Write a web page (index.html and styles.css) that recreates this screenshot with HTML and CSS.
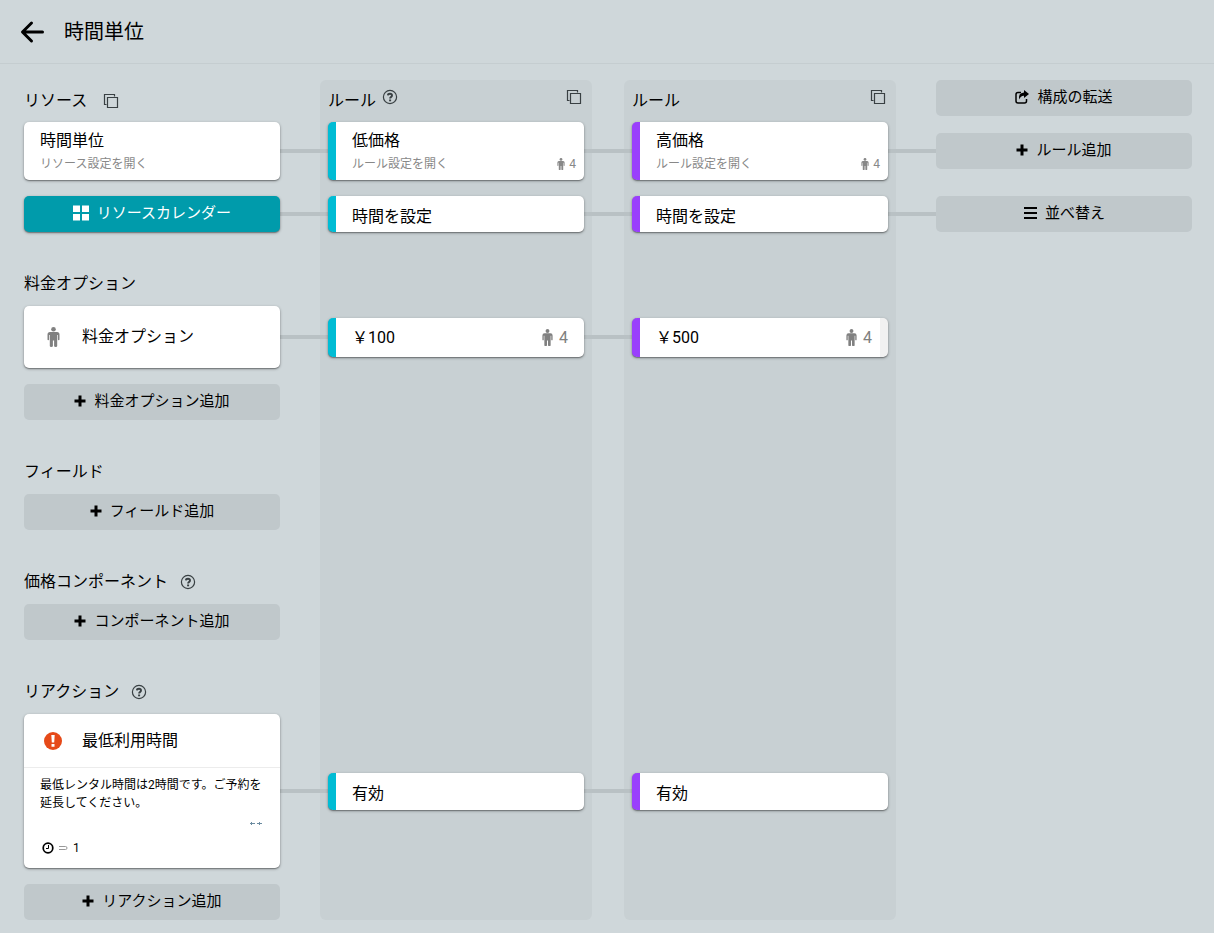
FILE: index.html
```html
<!DOCTYPE html>
<html lang="ja">
<head>
<meta charset="utf-8">
<meta name="viewport" content="width=device-width, initial-scale=1">
<title>時間単位</title>
<link rel="stylesheet" href="styles.css">
</head>
<body>
<svg class="sprite" aria-hidden="true">
  <symbol id="copy" viewBox="0 0 16 16"><path d="M3.500 11.500H1.500V1.500H11.500V3.500M4.500 4.500H14.500V14.500H4.500Z" fill="none" stroke="currentColor" stroke-width="1.200"/></symbol>
  <symbol id="help" viewBox="0 0 16 16"><circle cx="8" cy="8" r="6.600" fill="none" stroke="currentColor" stroke-width="1.200"/><path d="M5.900 6.300C6.100 4.200 10 4.200 10 6.400C10 7.900 8.100 7.900 8.100 9.400" fill="none" stroke="currentColor" stroke-width="1.900"/><path d="M7.100 10.500h2v1.800h-2z" fill="currentColor"/></symbol>
  <symbol id="plus" viewBox="0 0 12 12"><path d="M4.500 0.500h3v4h4v3h-4v4h-3v-4h-4v-3h4z" fill="currentColor"/></symbol>
  <symbol id="person" viewBox="0 0 12 20"><circle cx="6" cy="2.300" r="2.300" fill="currentColor"/><path d="M2.500 5H9.500Q12 5 12 7.500V12.500Q12 13.300 11.200 13.300Q10.400 13.300 10.400 12.500V8H9.700V19Q9.700 20 8.300 20Q6.600 20 6.600 19V13.500H5.400V19Q5.400 20 3.700 20Q2.300 20 2.300 19V8H1.600V12.500Q1.600 13.300 0.800 13.300Q0 13.300 0 12.500V7.500Q0 5 2.500 5Z" fill="currentColor"/></symbol>
</svg>
<header class="topbar">
  <button class="icon-button" type="button" aria-label="戻る"><svg class="back" viewBox="0 0 24 24" aria-hidden="true"><path d="M11.500 3L2.500 12L11.500 21M3 12H22.500" fill="none" stroke="currentColor" stroke-width="3" stroke-linecap="round" stroke-linejoin="round"/></svg></button>
  <h1 class="title">時間単位</h1>
</header>
<main class="board">
  <div class="panel panel-low"></div>
  <div class="panel panel-high"></div>
  <div class="line line-rule"></div>
  <div class="line line-time"></div>
  <div class="line line-price"></div>
  <div class="line line-reaction"></div>

  <div class="col-1 row-1 head"><h2 class="label">リソース</h2><button class="icon-button spaced" type="button" aria-label="リソースをコピー"><svg class="small-icon"><use href="#copy"/></svg></button></div>
  <div class="col-2 row-1 head"><h2 class="label">ルール</h2><button class="icon-button raised" type="button" aria-label="ヘルプ"><svg class="small-icon"><use href="#help"/></svg></button><button class="icon-button raised push" type="button" aria-label="ルールをコピー"><svg class="small-icon"><use href="#copy"/></svg></button></div>
  <div class="col-3 row-1 head"><h2 class="label">ルール</h2><button class="icon-button raised push" type="button" aria-label="ルールをコピー"><svg class="small-icon"><use href="#copy"/></svg></button></div>
  <button class="col-4 row-1 action" type="button"><svg class="action-icon" viewBox="0 0 14 14" aria-hidden="true"><path d="M6 2.500H3Q1 2.500 1 4.500V11Q1 13 3 13H9.500Q11.500 13 11.500 11V9" fill="none" stroke="currentColor" stroke-width="1.500"/><path d="M9 0L14 4L9 8V5.800Q5.500 5.600 4.500 9.500Q2.500 3 9 2.400Z" fill="currentColor"/></svg>構成の転送</button>

  <a class="col-1 row-2 card summary" href="#resource"><span class="name">時間単位</span><span class="hint">リソース設定を開く</span></a>
  <a class="col-2 row-2 card summary low" href="#low"><span class="name">低価格</span><span class="hint">ルール設定を開く<span class="count"><svg class="person-small"><use href="#person"/></svg>4</span></span></a>
  <a class="col-3 row-2 card summary high" href="#high"><span class="name">高価格</span><span class="hint">ルール設定を開く<span class="count"><svg class="person-small"><use href="#person"/></svg>4</span></span></a>
  <button class="col-4 row-2 action" type="button"><svg class="plus"><use href="#plus"/></svg>ルール追加</button>

  <button class="col-1 row-3 action primary" type="button"><svg class="grid-icon" viewBox="0 0 16 16" aria-hidden="true"><path d="M0 0.500H7V7H0ZM9 0.500H16V7H9ZM0 9H7V15.500H0ZM9 9H16V15.500H9Z" fill="currentColor"/></svg>リソースカレンダー</button>
  <a class="col-2 row-3 card cell low" href="#low-time">時間を設定</a>
  <a class="col-3 row-3 card cell high" href="#high-time">時間を設定</a>
  <button class="col-4 row-3 action" type="button"><svg class="action-icon" viewBox="0 0 14 14" aria-hidden="true"><path d="M1 2H14M1 7H14M1 12H14" fill="none" stroke="currentColor" stroke-width="2"/></svg>並べ替え</button>

  <div class="col-1 row-4 section"><h2 class="label">料金オプション</h2></div>
  <a class="col-1 row-5 card option" href="#option"><svg class="person-large"><use href="#person"/></svg>料金オプション</a>
  <a class="col-2 row-5 card price low" href="#low-price">￥100<span class="price-count"><svg class="person"><use href="#person"/></svg>4</span></a>
  <a class="col-3 row-5 card price high handled" href="#high-price">￥500<span class="price-count"><svg class="person"><use href="#person"/></svg>4</span></a>
  <button class="col-1 row-6 action below" type="button"><svg class="plus"><use href="#plus"/></svg>料金オプション追加</button>

  <div class="col-1 row-7 section"><h2 class="label">フィールド</h2></div>
  <button class="col-1 row-8 action" type="button"><svg class="plus"><use href="#plus"/></svg>フィールド追加</button>

  <div class="col-1 row-9 section"><h2 class="label">価格コンポーネント</h2><button class="icon-button" type="button" aria-label="ヘルプ"><svg class="small-icon"><use href="#help"/></svg></button></div>
  <button class="col-1 row-10 action" type="button"><svg class="plus"><use href="#plus"/></svg>コンポーネント追加</button>

  <div class="col-1 row-11 section"><h2 class="label">リアクション</h2><button class="icon-button" type="button" aria-label="ヘルプ"><svg class="small-icon"><use href="#help"/></svg></button></div>
  <article class="col-1 row-12 card reaction">
    <h3 class="reaction-title"><svg class="alert" viewBox="0 0 18 18" aria-hidden="true"><circle cx="9" cy="9" r="9" fill="#e64a19"/><path d="M7.300 3H10.700L10.200 10.500H7.800ZM7.500 12H10.500V14.800H7.500Z" fill="#fff"/></svg>最低利用時間</h3>
    <div class="reaction-body">
      <p class="message">最低レンタル時間は2時間です。ご予約を延長してください。</p>
      <svg class="arrows" viewBox="0 0 12 6" aria-hidden="true"><path d="M0 2.500H5M1.500 1V4M7 2.500H12M9.500 1V4" fill="none" stroke="#6b8ba0"/></svg>
      <p class="condition"><svg class="clock" viewBox="0 0 12 12" aria-hidden="true"><circle cx="6" cy="6" r="4.800" fill="none" stroke="currentColor" stroke-width="1.700"/><path d="M6.500 3V6.500H4" fill="none" stroke="currentColor"/></svg><svg class="implies" viewBox="0 0 9 6" aria-hidden="true"><path d="M0 1.500H6.500Q8 1.500 8 3Q8 4.500 6.500 4.500H0" fill="none" stroke="#999"/></svg>1</p>
    </div>
  </article>
  <a class="col-2 row-12 card cell low" href="#low-reaction">有効</a>
  <a class="col-3 row-12 card cell high" href="#high-reaction">有効</a>
  <button class="col-1 row-13 action below" type="button"><svg class="plus"><use href="#plus"/></svg>リアクション追加</button>
</main>
</body>
</html>
```
FILE: styles.css
```css
* { box-sizing: border-box; }
body {
  margin: 0;
  background: #cfd7da;
  color: #000;
  font: 16px/24px Roboto, "Noto Sans CJK JP", sans-serif;
}
h1, h2, h3, p { margin: 0; font-weight: 400; }
svg { flex: none; }
.sprite { display: none; }
.topbar {
  display: flex;
  align-items: center;
  gap: 20px;
  height: 64px;
  padding: 0 20px;
  border-bottom: 1px solid #c5cdd0;
}
.title { font-size: 20px; line-height: 28px; }
.back { width: 24px; height: 24px; display: block; }
.icon-button {
  display: flex;
  padding: 0;
  border: 0;
  background: none;
  color: #000;
  cursor: pointer;
}
.board {
  display: grid;
  grid-template-columns: repeat(4, minmax(0, 256px));
  column-gap: 48px;
  padding: 16px 22px 13px 24px;
}
.col-1 { grid-column: 1; }
.col-2 { grid-column: 2; }
.col-3 { grid-column: 3; }
.col-4 { grid-column: 4; }
.row-1 { grid-row: 1; }
.row-2 { grid-row: 2; }
.row-3 { grid-row: 3; }
.row-4 { grid-row: 4; }
.row-5 { grid-row: 5; }
.row-6 { grid-row: 6; }
.row-7 { grid-row: 7; }
.row-8 { grid-row: 8; }
.row-9 { grid-row: 9; }
.row-10 { grid-row: 10; }
.row-11 { grid-row: 11; }
.row-12 { grid-row: 12; }
.row-13 { grid-row: 13; }
.panel {
  grid-row: 1 / 14;
  margin: 0 -8px;
  border-radius: 6px;
  background: #c8d0d3;
}
.panel-low { grid-column: 2; }
.panel-high { grid-column: 3; }
.line {
  grid-column: 1 / 5;
  align-self: center;
  height: 4px;
  background: #b9c1c4;
}
.line-rule { grid-row: 2; }
.line-time { grid-row: 3; margin-top: 16px; }
.line-price { grid-row: 5; grid-column: 1 / 4; }
.line-reaction { grid-row: 12; grid-column: 1 / 4; }
.head {
  display: flex;
  align-items: center;
  gap: 6px;
  height: 42px;
}
.section {
  display: flex;
  align-items: flex-end;
  gap: 12px;
  height: 74px;
  padding-bottom: 10px;
}
.label { font-size: 16px; line-height: 24px; }
.small-icon {
  width: 16px;
  height: 16px;
  display: block;
  color: #394043;
}
.section .icon-button { padding-bottom: 4px; }
.spaced { margin-left: 10px; }
.raised { padding-bottom: 8px; }
.push { margin: 0 2px 0 auto; }
.card {
  align-self: center;
  border-radius: 5px;
  background: #fff;
  color: #000;
  text-decoration: none;
  box-shadow: 0 1px 3px rgba(0, 0, 0, .35), 0 1px 1px rgba(0, 0, 0, .25);
}
.low { border-left: 8px solid #00bcd4; }
.high { border-left: 8px solid #9a3ffc; }
.summary {
  display: flex;
  flex-direction: column;
  padding: 7px 8px 5px 16px;
}
.hint {
  display: flex;
  justify-content: space-between;
  color: #888;
  font-size: 12px;
  line-height: 22px;
}
.count { display: flex; align-items: center; gap: 4px; }
.person-small { width: 8px; height: 12px; }
.cell {
  display: flex;
  align-items: center;
  height: 36px;
  padding: 5px 16px 0;
}
.row-3 { margin-top: 16px; }
.row-12.cell { height: 37px; }
.action {
  display: flex;
  align-items: center;
  justify-content: center;
  align-self: center;
  gap: 8px;
  height: 36px;
  padding: 0 8px 2px;
  border: 0;
  border-radius: 5px;
  background: #c0c8cb;
  color: #000;
  font: 15px/24px Roboto, "Noto Sans CJK JP", sans-serif;
  white-space: nowrap;
  cursor: pointer;
}
.row-1.action { align-self: start; }
.below { margin-top: 16px; }
.primary {
  background: #009bab;
  color: #fff;
  box-shadow: 0 1px 3px rgba(0, 0, 0, .35), 0 1px 1px rgba(0, 0, 0, .25);
}
.action-icon { width: 14px; height: 14px; }
.plus { width: 12px; height: 12px; }
.grid-icon { width: 16px; height: 16px; }
.option {
  display: flex;
  align-items: center;
  gap: 22px;
  height: 62px;
  padding: 0 23px;
}
.person-large { width: 13px; height: 20px; color: #808080; }
.price {
  display: flex;
  align-items: center;
  justify-content: space-between;
  height: 39px;
  padding: 1px 16px 0;
}
.handled { border-right: 8px solid #f1f1f1; padding-right: 8px; }
.price-count { display: flex; align-items: center; gap: 6px; color: #808080; }
.person { width: 11px; height: 17px; }
.reaction-title {
  display: flex;
  align-items: center;
  gap: 20px;
  height: 54px;
  padding: 1px 20px 0;
  border-bottom: 1px solid #ececec;
  font-size: 16px;
}
.alert { width: 18px; height: 18px; }
.reaction-body {
  display: flex;
  flex-direction: column;
  padding: 8px 16px 11px;
  font-size: 12px;
  line-height: 18px;
}
.arrows { width: 12px; height: 6px; align-self: flex-end; margin: 9px 2px 12px; }
.condition { display: flex; align-items: center; gap: 5px; padding-left: 2px; }
.clock { width: 12px; height: 12px; }
.implies { width: 9px; height: 6px; }
```
